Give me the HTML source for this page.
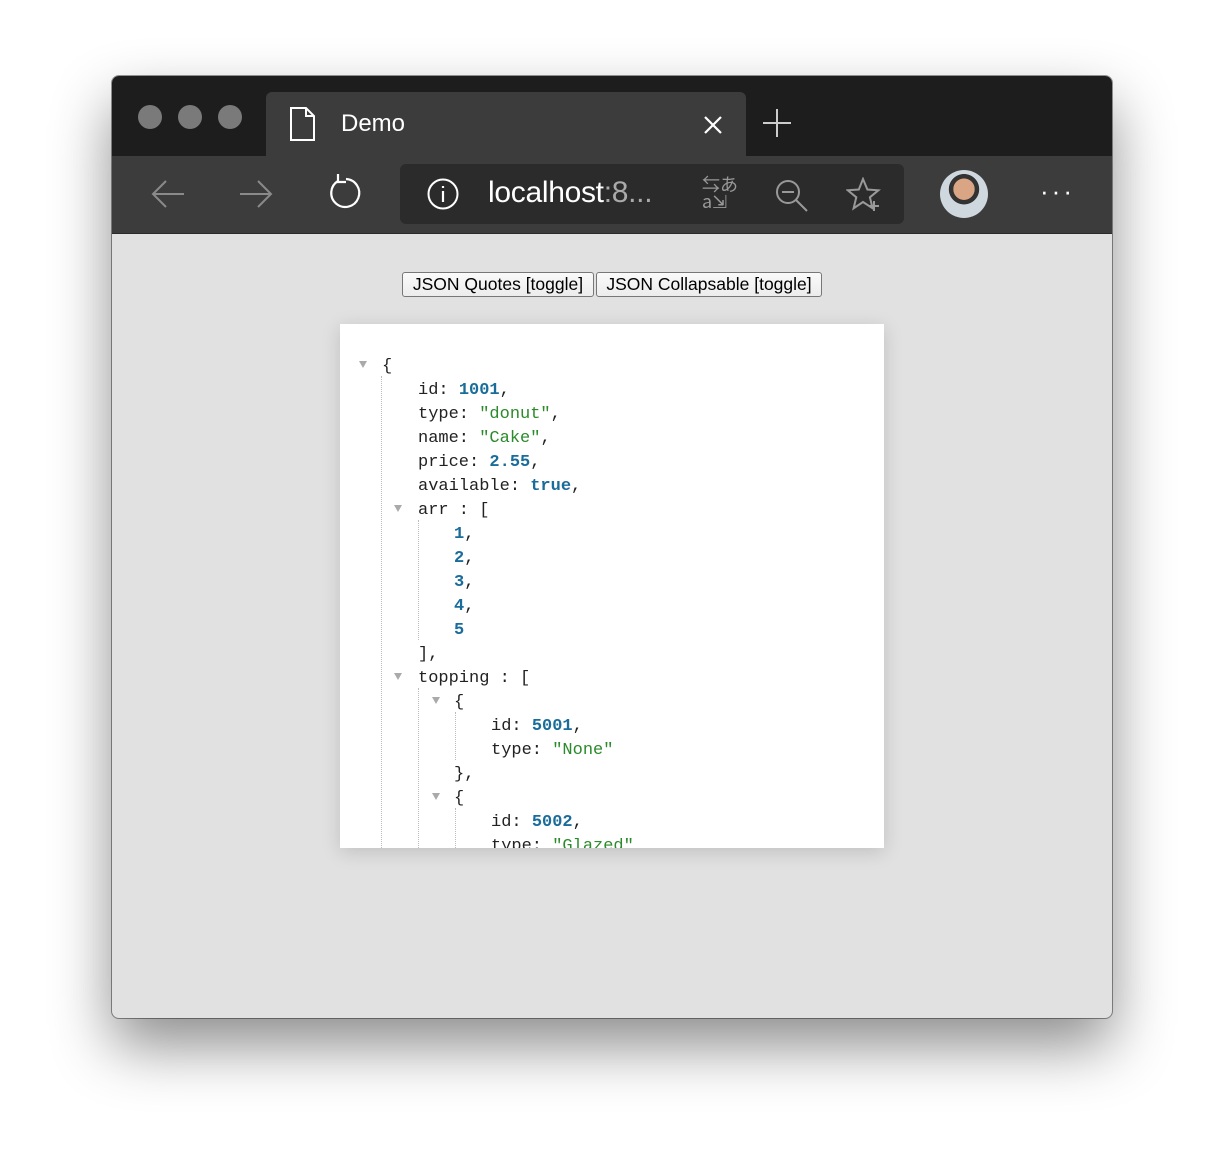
<!DOCTYPE html>
<html><head><style>
body{margin:0;width:1224px;height:1166px;background:#fff;position:relative;overflow:hidden;font-family:"Liberation Sans",sans-serif}
.win{position:absolute;left:112px;top:76px;width:1000px;height:942px;border-radius:7px;overflow:hidden;background:#e1e1e1;box-shadow:0 28px 60px rgba(0,0,0,.45),0 0 0 1px rgba(0,0,0,.4)}
.title{position:absolute;left:0;top:0;width:1000px;height:80px;background:#1d1d1d}
.dot{position:absolute;top:29px;width:24px;height:24px;border-radius:50%;background:#7a7a7a}
.tab{position:absolute;left:154px;top:16px;width:480px;height:64px;background:#3c3c3c;border-radius:6px 6px 0 0}
.tool{position:absolute;left:0;top:80px;width:1000px;height:77px;background:#3c3c3c;border-bottom:1px solid #2a2a2a}
.url{position:absolute;left:288px;top:8px;width:504px;height:60px;background:#2b2b2b;border-radius:6px}
.btns{position:absolute;top:196px;left:290px;font-size:17.5px}
.btn{position:absolute;top:0;height:23px;border:1px solid #777;border-radius:3px;background:linear-gradient(#fafafa,#ececec);line-height:23px;text-align:center;color:#000;white-space:nowrap;box-sizing:border-box;height:25px}
.box{position:absolute;left:228px;top:248px;width:544px;height:524px;background:#fff;overflow:hidden;box-shadow:0 4px 18px rgba(0,0,0,.15)}
.l{position:absolute;font-family:"Liberation Mono",monospace;font-size:17px;color:#222;white-space:pre;line-height:24px;margin-top:2px}
.n{color:#1a6c9a;font-weight:bold}.s{color:#2b8a2b}
.t{position:absolute;width:0;height:0;border-left:4px solid transparent;border-right:4px solid transparent;border-top:7px solid #aaa}
.v{position:absolute;border-left:1px dotted #bbb}
</style></head><body>
<div class="win">
<div class="title">
<div class="dot" style="left:26px"></div><div class="dot" style="left:66px"></div><div class="dot" style="left:106px"></div>
<div class="tab">
<svg style="position:absolute;left:22px;top:14px" width="30" height="36" viewBox="0 0 30 36"><path d="M3 2h15l8 8v24H3z M18 2v8h8" fill="none" stroke="#fff" stroke-width="2"/></svg>
<div style="position:absolute;left:75px;top:18px;color:#fff;font-size:24px">Demo</div>
<svg style="position:absolute;left:437px;top:23px" width="20" height="20"><path d="M2 2L18 18M18 2L2 18" stroke="#fff" stroke-width="2.2"/></svg>
</div>
<svg style="position:absolute;left:651px;top:33px" width="28" height="28"><path d="M14 0v28M0 14h28" stroke="#ccc" stroke-width="2"/></svg>
</div>
<div class="tool">
<svg style="position:absolute;left:38px;top:22px" width="36" height="32"><path d="M34 16H3M16 3L3 16l13 13" fill="none" stroke="#8a8a8a" stroke-width="2"/></svg>
<svg style="position:absolute;left:126px;top:22px" width="36" height="32"><path d="M2 16h31M20 3l13 13-13 13" fill="none" stroke="#8a8a8a" stroke-width="2"/></svg>
<svg style="position:absolute;left:212px;top:18px" width="40" height="40"><path d="M14 7A14 14 0 1 0 22 5" fill="none" stroke="#fff" stroke-width="2.2"/><path d="M14 0v8h8" fill="none" stroke="#fff" stroke-width="2.2"/></svg>
<div class="url">
<svg style="position:absolute;left:26px;top:13px" width="34" height="34"><circle cx="17" cy="17" r="14.5" fill="none" stroke="#fff" stroke-width="2"/><path d="M17 14v11M17 9v2" stroke="#fff" stroke-width="2.2"/></svg>
<div style="position:absolute;left:88px;top:12px;font-size:30px;color:#fff;letter-spacing:-.3px">localhost<span style="color:#aaa">:8...</span></div>
<div style="position:absolute;left:302px;top:12px;color:#999;font-size:18px;line-height:17px;font-family:'Noto Sans CJK JP',sans-serif">⇆あ<br>a⇲</div>
<svg style="position:absolute;left:374px;top:14px" width="36" height="36"><circle cx="14" cy="14" r="11" fill="none" stroke="#999" stroke-width="2"/><path d="M8 14h12M22 22l11 11" stroke="#999" stroke-width="2"/></svg>
<svg style="position:absolute;left:446px;top:13px" width="36" height="36"><path d="M17 2l4.4 10.5 11 .8-8.5 7 2.7 11L17 25l-9.4 6.3 2.7-11-8.5-7 11-.8z" fill="none" stroke="#999" stroke-width="2"/><path d="M28 24v10M23 29h10" stroke="#999" stroke-width="2"/></svg>
</div>
<div style="position:absolute;left:828px;top:14px;width:48px;height:48px;border-radius:50%;background:radial-gradient(circle at 50% 40%,#d9a585 0 28%,#333 29% 40%,#cfd8de 41%);"></div>
<div style="position:absolute;left:928px;top:20px;color:#fff;font-size:26px;letter-spacing:3px">···</div>
</div>
<div class="btns">
<div class="btn" style="left:0;width:192px">JSON Quotes [toggle]</div>
<div class="btn" style="left:194px;width:226px">JSON Collapsable [toggle]</div>
</div>
<div class="box">
<div class="t" style="left:19px;top:37px"></div>
<div class="t" style="left:54px;top:181px"></div>
<div class="t" style="left:54px;top:349px"></div>
<div class="t" style="left:92px;top:373px"></div>
<div class="t" style="left:92px;top:469px"></div>
<div class="v" style="left:41px;top:52px;height:480px"></div>
<div class="v" style="left:78px;top:196px;height:120px"></div>
<div class="v" style="left:78px;top:364px;height:170px"></div>
<div class="v" style="left:115px;top:388px;height:48px"></div>
<div class="v" style="left:115px;top:484px;height:48px"></div>
<div class="l" style="left:42px;top:29px">{</div>
<div class="l" style="left:78px;top:53px">id: <span class="n">1001</span>,</div>
<div class="l" style="left:78px;top:77px">type: <span class="s">"donut"</span>,</div>
<div class="l" style="left:78px;top:101px">name: <span class="s">"Cake"</span>,</div>
<div class="l" style="left:78px;top:125px">price: <span class="n">2.55</span>,</div>
<div class="l" style="left:78px;top:149px">available: <span class="n">true</span>,</div>
<div class="l" style="left:78px;top:173px">arr : [</div>
<div class="l" style="left:114px;top:197px"><span class="n">1</span>,</div>
<div class="l" style="left:114px;top:221px"><span class="n">2</span>,</div>
<div class="l" style="left:114px;top:245px"><span class="n">3</span>,</div>
<div class="l" style="left:114px;top:269px"><span class="n">4</span>,</div>
<div class="l" style="left:114px;top:293px"><span class="n">5</span></div>
<div class="l" style="left:78px;top:317px">],</div>
<div class="l" style="left:78px;top:341px">topping : [</div>
<div class="l" style="left:114px;top:365px">{</div>
<div class="l" style="left:151px;top:389px">id: <span class="n">5001</span>,</div>
<div class="l" style="left:151px;top:413px">type: <span class="s">"None"</span></div>
<div class="l" style="left:114px;top:437px">},</div>
<div class="l" style="left:114px;top:461px">{</div>
<div class="l" style="left:151px;top:485px">id: <span class="n">5002</span>,</div>
<div class="l" style="left:151px;top:509px">type: <span class="s">"Glazed"</span></div>
</div>
</div>
</body></html>
